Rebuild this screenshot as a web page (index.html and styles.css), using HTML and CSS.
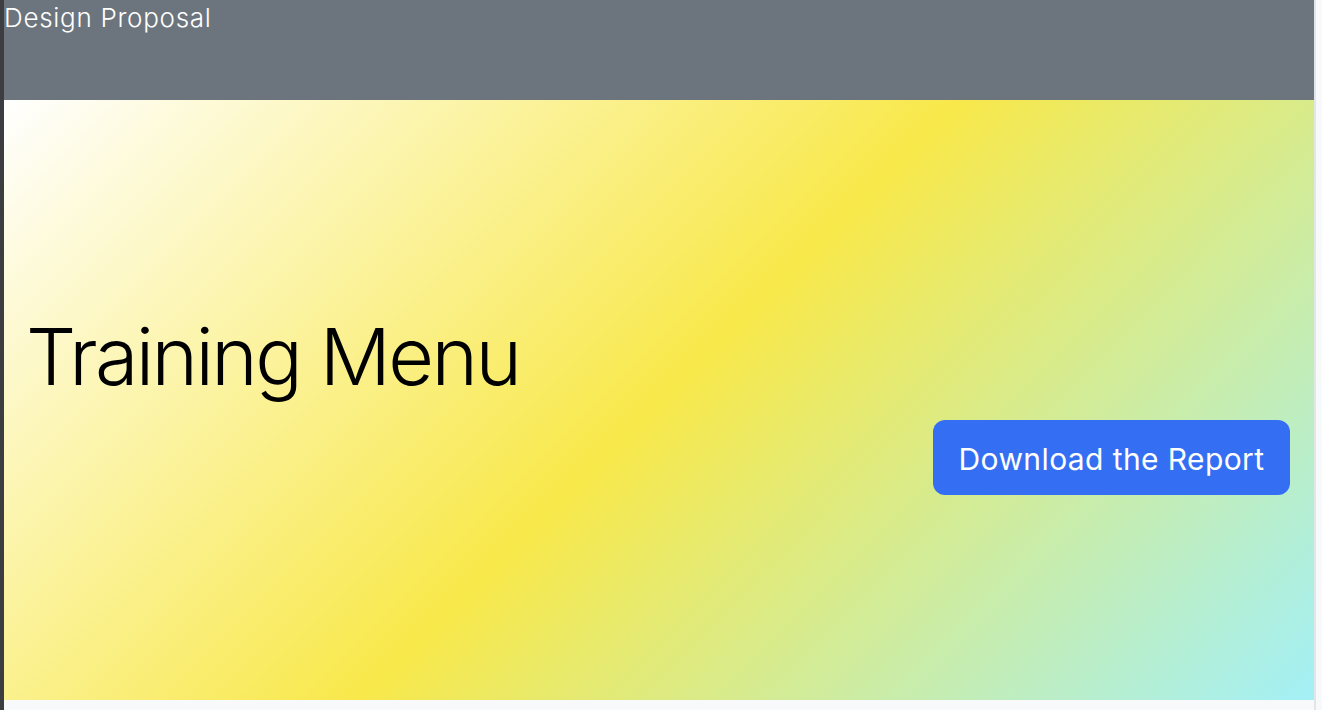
FILE: index.html
```html
<!DOCTYPE html>
<html lang="en">
<head>
<meta charset="utf-8">
<title>Design Proposal</title>
<link rel="stylesheet" href="styles.css">
</head>
<body>
<div class="frame">
  <div class="edge-left"></div>
  <div class="page">
    <header class="topbar">Design Proposal</header>
    <section class="hero">
      <h1 class="hero-title">Training Menu</h1>
      <div class="hero-actions">
        <button class="btn-primary" type="button">Download the Report</button>
      </div>
    </section>
  </div>
  <div class="edge-right"></div>
</div>
</body>
</html>
```

FILE: styles.css
```css
* { box-sizing: border-box; }
html, body { margin: 0; padding: 0; }
body {
  background: #f8f9fa;
  font-family: Inter, "Noto Sans", sans-serif;
  width: 1322px;
  height: 710px;
  overflow: hidden;
}
.frame {
  display: flex;
  height: 710px;
}
.edge-left {
  width: 4px;
  background: #3b3d40;
  flex: none;
}
.page {
  width: 1310px;
  flex: none;
  display: flex;
  flex-direction: column;
}
.edge-right {
  width: 2px;
  background: #e4e5e6;
  flex: none;
}
.topbar {
  height: 100px;
  background: #6c757d;
  color: #fff;
  font-size: 26px;
  font-weight: 300;
  letter-spacing: 0.7px;
  line-height: 36px;
  padding: 0;
  flex: none;
}
.hero {
  height: 600px;
  flex: none;
  background: linear-gradient(135deg, #ffffff 0%, #f8e84a 50%, #a3f0f7 100%);
  padding: 0 24px;
  display: flex;
  flex-direction: column;
  justify-content: center;
}
.hero-title {
  margin: 0 0 13px -2px;
  font-size: 79px;
  font-weight: 300;
  line-height: 101px;
  color: #000;
  letter-spacing: -2.6px;
}
.hero-actions {
  display: flex;
  justify-content: flex-end;
}
.btn-primary {
  font-family: inherit;
  background: #346ff3;
  color: #fff;
  border: none;
  border-radius: 12px;
  font-size: 30px;
  font-weight: 400;
  letter-spacing: 0.4px;
  line-height: 45px;
  padding: 17px 0 13px;
  height: 75px;
  width: 357px;
  text-align: center;
}
```
